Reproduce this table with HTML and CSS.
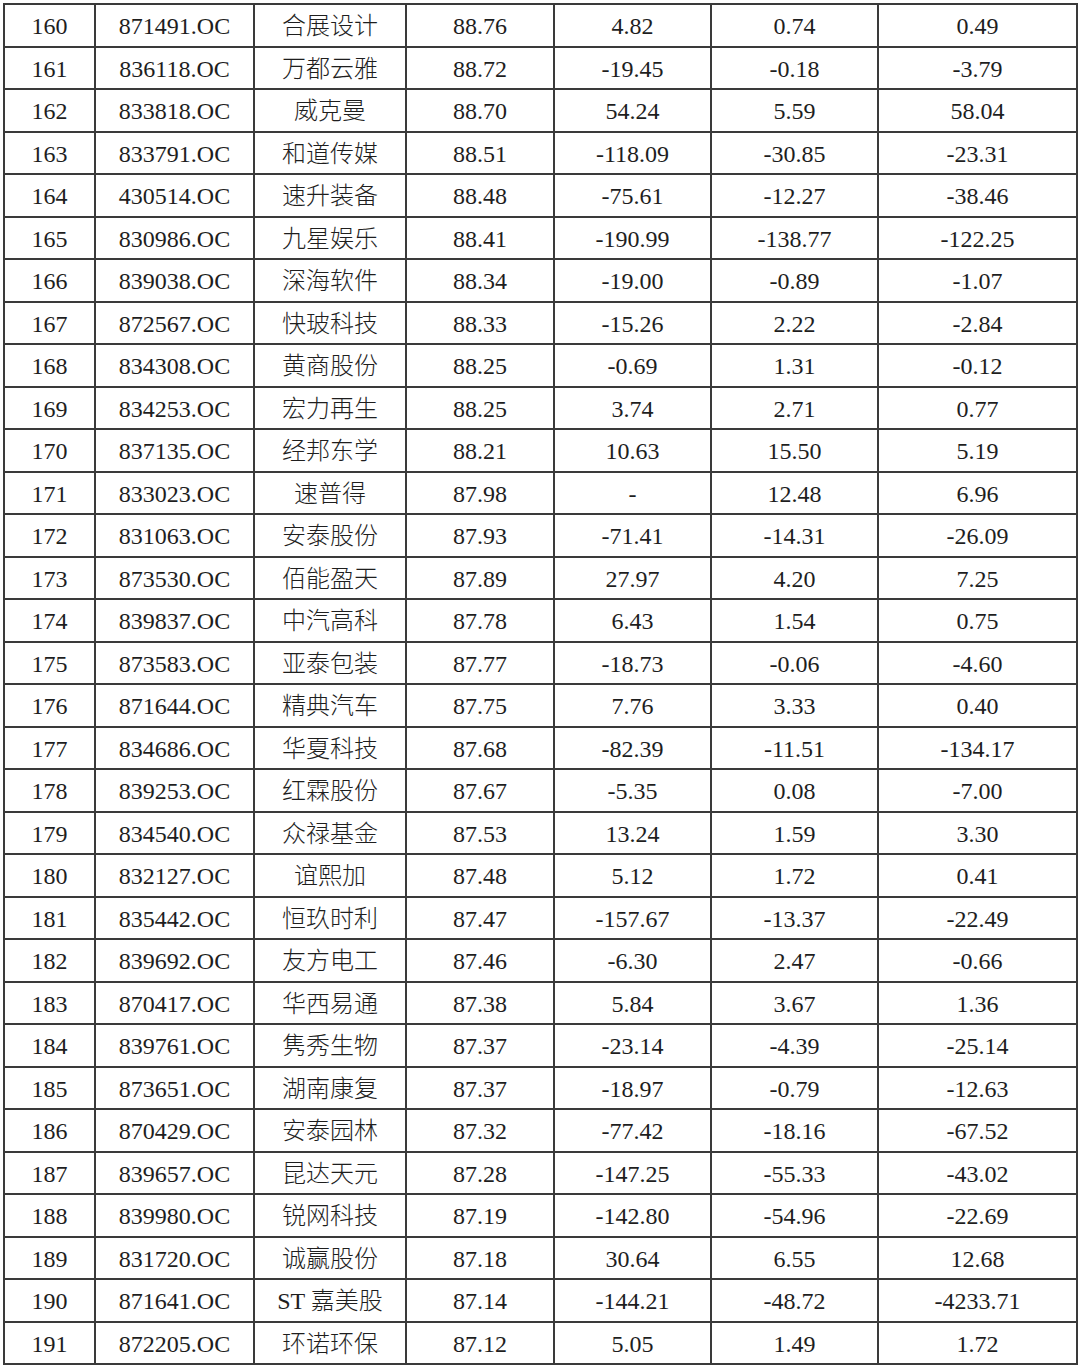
FILE: index.html
```html
<!DOCTYPE html>
<html lang="zh">
<head>
<meta charset="utf-8">
<link rel="stylesheet" href="styles.css">
</head>
<body>
<div class="wrap">
<table class="data">
<colgroup>
<col class="c1"><col class="c2"><col class="c3"><col class="c4"><col class="c5"><col class="c6"><col class="c7">
</colgroup>
<tbody>
<tr><td>160</td><td>871491.OC</td><td>合展设计</td><td>88.76</td><td>4.82</td><td>0.74</td><td>0.49</td></tr>
<tr><td>161</td><td>836118.OC</td><td>万都云雅</td><td>88.72</td><td>-19.45</td><td>-0.18</td><td>-3.79</td></tr>
<tr><td>162</td><td>833818.OC</td><td>威克曼</td><td>88.70</td><td>54.24</td><td>5.59</td><td>58.04</td></tr>
<tr><td>163</td><td>833791.OC</td><td>和道传媒</td><td>88.51</td><td>-118.09</td><td>-30.85</td><td>-23.31</td></tr>
<tr><td>164</td><td>430514.OC</td><td>速升装备</td><td>88.48</td><td>-75.61</td><td>-12.27</td><td>-38.46</td></tr>
<tr><td>165</td><td>830986.OC</td><td>九星娱乐</td><td>88.41</td><td>-190.99</td><td>-138.77</td><td>-122.25</td></tr>
<tr><td>166</td><td>839038.OC</td><td>深海软件</td><td>88.34</td><td>-19.00</td><td>-0.89</td><td>-1.07</td></tr>
<tr><td>167</td><td>872567.OC</td><td>快玻科技</td><td>88.33</td><td>-15.26</td><td>2.22</td><td>-2.84</td></tr>
<tr><td>168</td><td>834308.OC</td><td>黄商股份</td><td>88.25</td><td>-0.69</td><td>1.31</td><td>-0.12</td></tr>
<tr><td>169</td><td>834253.OC</td><td>宏力再生</td><td>88.25</td><td>3.74</td><td>2.71</td><td>0.77</td></tr>
<tr><td>170</td><td>837135.OC</td><td>经邦东学</td><td>88.21</td><td>10.63</td><td>15.50</td><td>5.19</td></tr>
<tr><td>171</td><td>833023.OC</td><td>速普得</td><td>87.98</td><td>-</td><td>12.48</td><td>6.96</td></tr>
<tr><td>172</td><td>831063.OC</td><td>安泰股份</td><td>87.93</td><td>-71.41</td><td>-14.31</td><td>-26.09</td></tr>
<tr><td>173</td><td>873530.OC</td><td>佰能盈天</td><td>87.89</td><td>27.97</td><td>4.20</td><td>7.25</td></tr>
<tr><td>174</td><td>839837.OC</td><td>中汽高科</td><td>87.78</td><td>6.43</td><td>1.54</td><td>0.75</td></tr>
<tr><td>175</td><td>873583.OC</td><td>亚泰包装</td><td>87.77</td><td>-18.73</td><td>-0.06</td><td>-4.60</td></tr>
<tr><td>176</td><td>871644.OC</td><td>精典汽车</td><td>87.75</td><td>7.76</td><td>3.33</td><td>0.40</td></tr>
<tr><td>177</td><td>834686.OC</td><td>华夏科技</td><td>87.68</td><td>-82.39</td><td>-11.51</td><td>-134.17</td></tr>
<tr><td>178</td><td>839253.OC</td><td>红霖股份</td><td>87.67</td><td>-5.35</td><td>0.08</td><td>-7.00</td></tr>
<tr><td>179</td><td>834540.OC</td><td>众禄基金</td><td>87.53</td><td>13.24</td><td>1.59</td><td>3.30</td></tr>
<tr><td>180</td><td>832127.OC</td><td>谊熙加</td><td>87.48</td><td>5.12</td><td>1.72</td><td>0.41</td></tr>
<tr><td>181</td><td>835442.OC</td><td>恒玖时利</td><td>87.47</td><td>-157.67</td><td>-13.37</td><td>-22.49</td></tr>
<tr><td>182</td><td>839692.OC</td><td>友方电工</td><td>87.46</td><td>-6.30</td><td>2.47</td><td>-0.66</td></tr>
<tr><td>183</td><td>870417.OC</td><td>华西易通</td><td>87.38</td><td>5.84</td><td>3.67</td><td>1.36</td></tr>
<tr><td>184</td><td>839761.OC</td><td>隽秀生物</td><td>87.37</td><td>-23.14</td><td>-4.39</td><td>-25.14</td></tr>
<tr><td>185</td><td>873651.OC</td><td>湖南康复</td><td>87.37</td><td>-18.97</td><td>-0.79</td><td>-12.63</td></tr>
<tr><td>186</td><td>870429.OC</td><td>安泰园林</td><td>87.32</td><td>-77.42</td><td>-18.16</td><td>-67.52</td></tr>
<tr><td>187</td><td>839657.OC</td><td>昆达天元</td><td>87.28</td><td>-147.25</td><td>-55.33</td><td>-43.02</td></tr>
<tr><td>188</td><td>839980.OC</td><td>锐网科技</td><td>87.19</td><td>-142.80</td><td>-54.96</td><td>-22.69</td></tr>
<tr><td>189</td><td>831720.OC</td><td>诚赢股份</td><td>87.18</td><td>30.64</td><td>6.55</td><td>12.68</td></tr>
<tr><td>190</td><td>871641.OC</td><td>ST 嘉美股</td><td>87.14</td><td>-144.21</td><td>-48.72</td><td>-4233.71</td></tr>
<tr><td>191</td><td>872205.OC</td><td>环诺环保</td><td>87.12</td><td>5.05</td><td>1.49</td><td>1.72</td></tr>
</tbody>
</table>
</div>
</body>
</html>
```

FILE: styles.css
```css
html, body {
  margin: 0;
  padding: 0;
  background: #ffffff;
}

.wrap {
  padding: 3px 0 0 3px;
}

.data {
  border-collapse: collapse;
  table-layout: fixed;
  width: 1073px;
  font-family: "Liberation Serif", "Noto Sans CJK SC", serif;
  font-size: 24px;
  font-weight: 300;
  color: #1e1e1e;
}

.c1 { width: 91px; }
.c2 { width: 159px; }
.c3 { width: 152px; }
.c4 { width: 148px; }
.c5 { width: 157px; }
.c6 { width: 167px; }
.c7 { width: 199px; }

.data tr {
  height: 42.5px;
}

.data td {
  border: 2px solid #3a3a3a;
  text-align: center;
  vertical-align: middle;
  padding: 2px 0 0 0;
  line-height: 1;
  white-space: nowrap;
}
```
